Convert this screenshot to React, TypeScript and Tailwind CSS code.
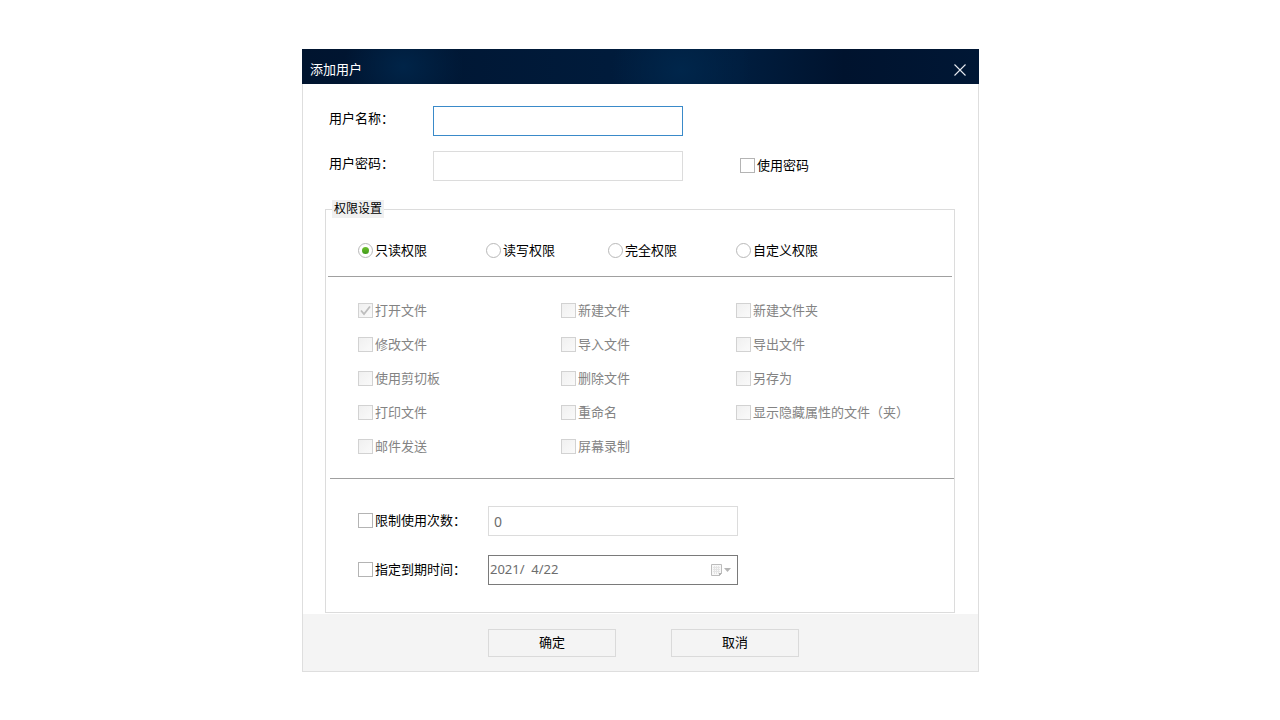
import React, { useState } from 'react';

const roles = ['只读权限', '读写权限', '完全权限', '自定义权限'];

const permissions = [
  '打开文件', '新建文件', '新建文件夹',
  '修改文件', '导入文件', '导出文件',
  '使用剪切板', '删除文件', '另存为',
  '打印文件', '重命名', '显示隐藏属性的文件（夹）',
  '邮件发送', '屏幕录制',
];

interface CheckProps {
  label: string;
  disabled?: boolean;
  defaultChecked?: boolean;
}

const Check: React.FC<CheckProps> = ({ label, disabled, defaultChecked }) => {
  return (
    <label className="flex items-center gap-0.5 leading-[15px] whitespace-nowrap text-black has-disabled:text-[#838383]">
      <span className="grid shrink-0">
        <input
          type="checkbox"
          disabled={disabled}
          defaultChecked={defaultChecked}
          className="peer col-start-1 row-start-1 appearance-none w-[15px] h-[15px] border border-[#b4b4b4] bg-white disabled:border-[#d2d2d2] disabled:bg-linear-to-br disabled:from-[#f0f0f0] disabled:to-[#fafafa]"
        />
        <svg viewBox="0 0 15 15" className="col-start-1 row-start-1 w-[15px] h-[15px] pointer-events-none invisible peer-checked:visible text-[#4ca81c] peer-disabled:text-[#bdbdbd]">
          <path d="M3 7.5L6 11L12 3.5" fill="none" stroke="currentColor" strokeWidth="1.8" />
        </svg>
      </span>
      {label}
    </label>
  );
};

interface RadioProps {
  label: string;
  checked: boolean;
  onChange: () => void;
}

const Radio: React.FC<RadioProps> = ({ label, checked, onChange }) => {
  return (
    <label className="flex items-center gap-0.5 leading-[15px] whitespace-nowrap">
      <span className="grid shrink-0 place-items-center">
        <input
          type="radio"
          name="role"
          checked={checked}
          onChange={onChange}
          className="peer col-start-1 row-start-1 appearance-none w-[15px] h-[15px] rounded-full border border-[#b8b8b8] bg-white"
        />
        <span className="col-start-1 row-start-1 w-[7px] h-[7px] rounded-full bg-linear-to-b from-[#6cc02c] to-[#3f9a1a] pointer-events-none invisible peer-checked:visible" />
      </span>
      {label}
    </label>
  );
};

const App: React.FC = () => {
  const [role, setRole] = useState(roles[0]);

  return (
    <main lang="zh-CN" className="min-h-screen bg-white pt-[49px] pb-12 pl-px font-['Noto_Sans','Noto_Sans_CJK_SC',sans-serif] text-[13px] text-black">
      <form className="w-full max-w-[677px] mx-auto" onSubmit={(e) => e.preventDefault()}>
        {/* Title bar */}
        <header className="flex items-center justify-between pt-1.5 h-[35px] pl-2 pr-[11px] bg-[#001938] bg-[radial-gradient(ellipse_60px_50px_at_15%_50%,#002448,transparent),radial-gradient(ellipse_70px_60px_at_56%_60%,#00264b,transparent),linear-gradient(to_right,#00142f,#001b3b_45%,#001d3e_65%,#00132e_80%,#001735)]">
          <h1 className="text-white">添加用户</h1>
          <button type="button" aria-label="关闭" className="p-0.5">
            <svg viewBox="0 0 12 12" className="w-3 h-3">
              <path d="M0.5 0.5L11.5 11.5M11.5 0.5L0.5 11.5" fill="none" stroke="#e6eaf0" strokeWidth="1.1" />
            </svg>
          </button>
        </header>

        <div className="border-x border-b border-[#dedede]">
          {/* Account */}
          <div className="flex flex-col gap-[15px] pt-[22px] pb-[19px] pl-[26px]">
            <div className="flex items-center">
              <label htmlFor="name" className="w-26 pb-1">用户名称：</label>
              <input id="name" type="text" className="w-[250px] h-[30px] px-[5px] border border-[#3a8ac9] outline-none" />
            </div>
            <div className="flex items-center">
              <label htmlFor="password" className="w-26 pb-1">用户密码：</label>
              <input id="password" type="password" className="w-[250px] h-[30px] px-[5px] mr-[57px] border border-[#dcdcdc] outline-none" />
              <div className="pb-px">
                <Check label="使用密码" />
              </div>
            </div>
          </div>

          {/* Permissions */}
          <fieldset className="ml-[22px] mr-[23px] mb-px border border-[#dcdcdc]">
            <legend className="ml-1.5 px-0.5 h-[18px] leading-[18px] text-xs bg-[#f0f0f0]">权限设置</legend>
            <div className="grid grid-cols-[128px_122px_128px_auto] px-8 pt-[25px] pb-[18px]">
              {roles.map((r) => (
                <Radio key={r} label={r} checked={role === r} onChange={() => setRole(r)} />
              ))}
            </div>
            <hr className="mx-0.5 border-[#a0a0a0]" />
            <div className="grid grid-cols-[203px_175px_auto] gap-y-[19px] px-8 pt-[26px] pb-6">
              {permissions.map((p, i) => (
                <Check key={p} label={p} disabled defaultChecked={i === 0} />
              ))}
            </div>
            <hr className="ml-1 border-[#a0a0a0]" />
            <div className="flex flex-col gap-[19px] px-8 py-[27px]">
              <div className="flex items-center">
                <div className="w-[130px] pb-px">
                  <Check label="限制使用次数：" />
                </div>
                <input type="text" aria-label="限制使用次数" defaultValue="0" className="w-[250px] h-[30px] px-[5px] border border-[#dcdcdc] text-sm text-[#6d6d6d] outline-none" />
              </div>
              <div className="flex items-center">
                <div className="w-[130px] pb-px">
                  <Check label="指定到期时间：" />
                </div>
                <div className="flex items-center w-[250px] h-[30px] pl-px pr-1.5 border border-[#7a7a7a]">
                  <input type="text" aria-label="指定到期时间" defaultValue="2021/  4/22" className="flex-1 min-w-0 text-[#6d6d6d] outline-none" />
                  <button type="button" aria-label="选择日期">
                    <svg viewBox="0 0 20 14" className="w-5 h-3.5">
                      <path d="M0.5 1.5H10.5V10.5L8.5 12.5H0.5Z" fill="#f8f8f8" stroke="#bcbcbc" />
                      <path d="M2 4.5H9M2 6.5H9M2 8.5H9M3.5 3V11M5.5 3V11M7.5 3V11" stroke="#e4e4e4" />
                      <path d="M8 13V10H11Z" fill="#b0b0b0" />
                      <path d="M13 5H20L16.5 9Z" fill="#b5b5b5" />
                    </svg>
                  </button>
                </div>
              </div>
            </div>
          </fieldset>

          {/* Actions */}
          <footer className="flex gap-[55px] pt-[15px] pb-3.5 pl-[185px] bg-[#f4f4f4]">
            <button type="submit" className="w-32 h-7 pb-px border border-[#dadada]">确定</button>
            <button type="button" className="w-32 h-7 pb-px border border-[#dadada]">取消</button>
          </footer>
        </div>
      </form>
    </main>
  );
};

export default App;
